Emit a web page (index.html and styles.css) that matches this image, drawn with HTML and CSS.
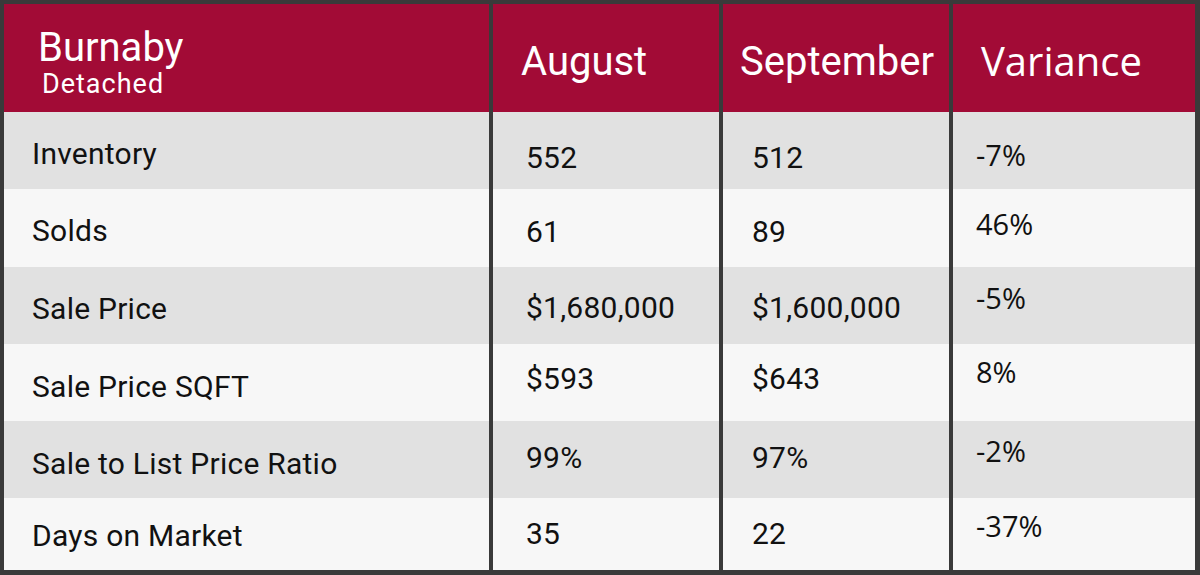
FILE: index.html
```html
<!DOCTYPE html>
<html lang="en">
<head>
<meta charset="utf-8">
<title>Burnaby Detached</title>
<link rel="stylesheet" href="styles.css">
</head>
<body>
<div class="table">
  <div class="row head">
    <div class="cell c1"><div class="title">Burnaby</div><div class="subtitle">Detached</div></div>
    <div class="cell c2">August</div>
    <div class="cell c3">September</div>
    <div class="cell c4">Variance</div>
  </div>
  <div class="row shade r1">
    <div class="cell c1">Inventory</div>
    <div class="cell c2">552</div>
    <div class="cell c3">512</div>
    <div class="cell c4">-7%</div>
  </div>
  <div class="row light r2">
    <div class="cell c1">Solds</div>
    <div class="cell c2">61</div>
    <div class="cell c3">89</div>
    <div class="cell c4">46%</div>
  </div>
  <div class="row shade r3">
    <div class="cell c1">Sale Price</div>
    <div class="cell c2">$1,680,000</div>
    <div class="cell c3">$1,600,000</div>
    <div class="cell c4">-5%</div>
  </div>
  <div class="row light r4">
    <div class="cell c1">Sale Price SQFT</div>
    <div class="cell c2">$593</div>
    <div class="cell c3">$643</div>
    <div class="cell c4">8%</div>
  </div>
  <div class="row shade r5">
    <div class="cell c1">Sale to List Price Ratio</div>
    <div class="cell c2">99%</div>
    <div class="cell c3">97%</div>
    <div class="cell c4">-2%</div>
  </div>
  <div class="row light r6">
    <div class="cell c1">Days on Market</div>
    <div class="cell c2">35</div>
    <div class="cell c3">22</div>
    <div class="cell c4">-37%</div>
  </div>
</div>
</body>
</html>
```
FILE: styles.css
```css
html, body {
  margin: 0;
  padding: 0;
  background: #3a3a3a;
}
body {
  width: 1200px;
  height: 575px;
  overflow: hidden;
}
.table {
  box-sizing: border-box;
  width: 1200px;
  height: 575px;
  border-style: solid;
  border-color: #3a3a3a;
  border-width: 4px 5px 5px 4px;
  background: #3a3a3a;
  display: grid;
  grid-template-columns: 485px 226px 226px 242px;
  grid-template-rows: 108px 77px 78px 77px 77px 77px 72px;
  column-gap: 4px;
  font-family: Roboto, "Liberation Sans", sans-serif;
  color: #111;
}
.row { display: contents; }
.cell {
  box-sizing: border-box;
  font-size: 30px;
  line-height: 34px;
  letter-spacing: 0.25px;
  white-space: nowrap;
}
.shade .cell { background: #e1e1e1; }
.light .cell { background: #f7f7f7; }

/* header */
.head .cell {
  background: #a20b36;
  color: #fff;
  font-size: 40px;
  line-height: 48px;
  letter-spacing: 0;
  padding-top: 34px;
}
.head .c1 { padding: 22px 0 0 34px; }
.head .c2 { padding-left: 28px; }
.head .c3 { padding-left: 17px; }
.head .c4 { padding-left: 28px; padding-top: 33px; }
.title { font-size: 40px; line-height: 44px; }
.subtitle {
  font-size: 27px;
  line-height: 28px;
  padding-left: 4px;
  letter-spacing: 1px;
}

/* body columns */
.c1 { padding-left: 28px; }
.c2 { padding-left: 33px; }
.c3 { padding-left: 29px; }
.c4 {
  padding-left: 23px;
  font-family: "Open Sans", "Liberation Sans", sans-serif;
  letter-spacing: 0;
}
.row:not(.head) .c4 { font-size: 29px; line-height: 40px; }

.r1 .c1 { padding-top: 25px; }
.r2 .c1 { padding-top: 25px; }
.r3 .c1 { padding-top: 25px; }
.r4 .c1 { padding-top: 26px; }
.r5 .c1 { padding-top: 26px; }
.r6 .c1 { padding-top: 21px; }

.r1 .c2, .r1 .c3 { padding-top: 29px; }
.r2 .c2, .r2 .c3 { padding-top: 26px; }
.r3 .c2, .r3 .c3 { padding-top: 24px; }
.r4 .c2, .r4 .c3 { padding-top: 18px; }
.r5 .c2, .r5 .c3 { padding-top: 20px; }
.r6 .c2, .r6 .c3 { padding-top: 19px; }

.r1 .c4 { padding-top: 23px; }
.r2 .c4 { padding-top: 15px; }
.r3 .c4 { padding-top: 11px; }
.r4 .c4 { padding-top: 8px; }
.r5 .c4 { padding-top: 10px; }
.r6 .c4 { padding-top: 8px; }
```
